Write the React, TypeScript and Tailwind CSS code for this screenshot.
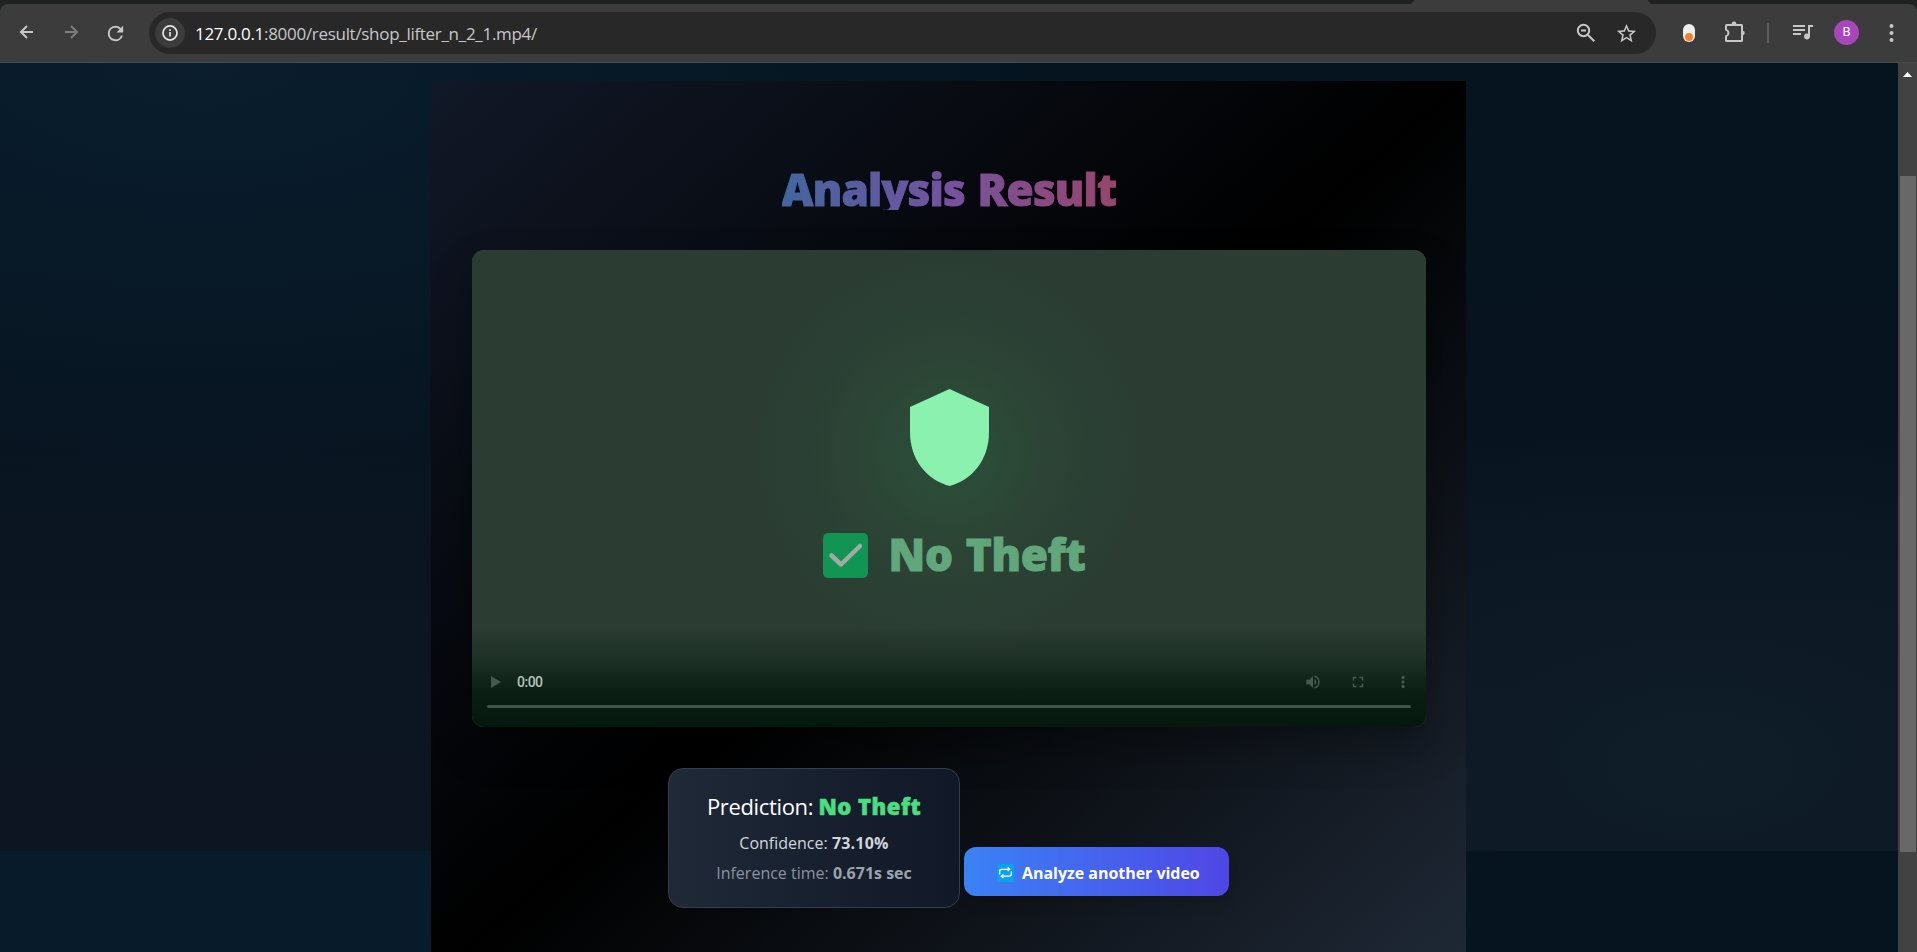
import React from "react";

const T = ({ className, children }: { className: string; children: React.ReactNode }) => (
  <span className={"inline-block whitespace-nowrap " + className}>{children}</span>
);

function Toolbar() {
  return (
    <header className="h-[63px] shrink-0 bg-[#1f2120]">
      <div className="flex h-[4px]">
        <div className="h-[4px] w-[1415px] rounded-br-[10px_4px] bg-[#1f2120]" />
        <div className="-mx-[4px] h-[4px] flex-1 bg-[#3c3c3c] [clip-path:polygon(0_100%,1.5%_0,98.5%_0,100%_100%)]" />
        <div className="h-[4px] w-[270px]" />
      </div>
      <div className="flex h-[59px] items-center rounded-t-[8px] border-b border-[#4a4a47] bg-[#3c3c3c] text-[#c7c7c7]">
        <svg className="ml-[15px] size-[24px] -translate-y-px" viewBox="0 0 24 24" fill="none" stroke="currentColor" strokeWidth="2">
          <path d="M18 12H6.500M12 6l-6 6 6 6" />
        </svg>
        <svg className="ml-[20px] size-[24px] -translate-y-px text-[#7d7d7d]" viewBox="0 0 24 24" fill="none" stroke="currentColor" strokeWidth="2">
          <path d="M6 12h11.500M12 6l6 6-6 6" />
        </svg>
        <svg className="ml-[21px] size-[23px]" viewBox="0 0 24 24" fill="currentColor">
          <path d="M17.65 6.35A7.96 7.96 0 0 0 12 4a8 8 0 1 0 7.73 10h-2.08A6 6 0 1 1 12 6c1.66 0 3.14.69 4.22 1.78L13 11h7V4z" />
        </svg>
        <div className="ml-[22px] flex h-[42px] w-[1507px] items-center rounded-full bg-[#282828] pl-[6px]">
          <div className="flex size-[30px] items-center justify-center rounded-full bg-[#3c3c3c]">
            <svg className="size-[18px] text-[#e3e3e3]" viewBox="0 0 20 20" fill="none" stroke="currentColor" strokeWidth="1.900">
              <circle cx="10" cy="10" r="7.800" />
              <path d="M10 9v5M10 5.800v2" />
            </svg>
          </div>
          <T className="ml-[10px] translate-y-px font-['Open_Sans',sans-serif] text-[17px] tracking-[-0.3px] text-[#c7c7c7]">
            <span className="text-white">127.0.0.1</span>:8000/result/shop_lifter_n_2_1.mp4/
          </T>
          <div className="ml-auto flex items-center gap-[17px] pr-[18px]">
            <svg className="size-[24px]" viewBox="0 0 24 24" fill="none" stroke="currentColor" strokeWidth="2">
              <circle cx="9.500" cy="9.500" r="5.700" />
              <path d="M14 14l6.300 6.300M7 9.500h5" />
            </svg>
            <svg className="size-[23px]" viewBox="0 0 24 24" fill="currentColor">
              <path d="M22 9.24l-7.19-.62L12 2 9.19 8.63 2 9.24l5.46 4.73L5.82 21 12 17.27 18.18 21l-1.63-7.03zM12 15.4l-3.76 2.27 1-4.28-3.32-2.88 4.38-.38L12 6.1l1.71 4.04 4.38.38-3.32 2.88 1 4.28z" />
            </svg>
          </div>
        </div>
        <div className="ml-[27px] flex h-[18px] w-[12px] items-end justify-center rounded-full bg-[#eeeeee] pb-px">
          <div className="size-[8px] rounded-full bg-[#f5802d]" />
        </div>
        <svg className="ml-[28px] size-[24px] -translate-y-px" viewBox="0 0 24 24" fill="currentColor">
          <path fillRule="evenodd" d="M3.500 4H8.600a2.400 2.400 0 0 1 4.800 0H18.500Q20 4 20 5.500V10.700a2.400 2.400 0 0 1 0 4.600V20.500Q20 22 18.500 22H3.500Q2 22 2 20.500V15.700Q4.500 15 4.500 13T2 10.300V5.500Q2 4 3.500 4zM4 6v3.200Q6.500 10.500 6.500 13T4 16.800V20H18V6z" />
        </svg>
        <div className="ml-[20px] h-[20px] w-[2px] bg-[#5e5e5e]" />
        <svg className="ml-[22px] size-[24px] -translate-y-px" viewBox="0 0 24 24" fill="currentColor">
          <path d="M2 5h12v2H2zM2 9h12v2H2zM2 13h8v2H2zM17 5h5v2h-3v9.500a3 3 0 1 1-2-2.830z" />
        </svg>
        <div className="ml-[19px] flex size-[25px] -translate-y-px items-center justify-center rounded-full bg-[#a946bb] font-[Roboto,sans-serif] text-[13px] text-white">B</div>
        <svg className="ml-[20px] size-[24px]" viewBox="0 0 24 24" fill="currentColor">
          <circle cx="12.500" cy="5" r="2" />
          <circle cx="12.500" cy="12" r="2" />
          <circle cx="12.500" cy="19" r="2" />
        </svg>
      </div>
    </header>
  );
}

function Player() {
  return (
    <div className="relative flex h-[477px] w-[954px] flex-col overflow-hidden rounded-[12px] bg-[#2b3d32]">
      <div className="absolute inset-0 bg-[radial-gradient(circle_at_477px_202px,#2a4e3b_0,#2c4a38_50px,#2c4435_95px,#2b4034_140px,#2b3d32_200px)]" />
      <div className="absolute inset-x-0 bottom-0 h-[100px] bg-[linear-gradient(to_bottom,rgba(4,24,14,0)_0%,rgba(4,24,14,0.3)_30%,rgba(4,24,14,0.85)_66%,#04180e_100%)]" />
      <div className="relative flex flex-col items-center pt-[139px] pl-px">
        <svg className="h-[97px] w-[79px]" viewBox="0 0 79 97">
          <path fill="#8af1ae" d="M39.500 0L79 18v25c0 28-17 48-39.500 54C17 91 0 71 0 43V18z" />
        </svg>
        <div className="mt-[44px] ml-[10px] flex h-[50px] w-[264px] items-center">
          <svg className="size-[45px] shrink-0" viewBox="0 0 45 45">
            <rect width="45" height="45" rx="5" fill="#129453" />
            <path d="M8.500 22.500l9.500 9 19-18.500" fill="none" stroke="#a1aaa4" strokeWidth="4.500" strokeLinecap="round" strokeLinejoin="round" />
          </svg>
          <T className="ml-[21px] -translate-y-px font-['Open_Sans',sans-serif] text-[44px] leading-[50px] font-extrabold tracking-[-0.3px] text-[#62a77b] [-webkit-text-stroke:1px_#62a77b] [word-spacing:2px]">No Theft</T>
        </div>
      </div>
      <div className="relative mt-auto h-[65px] px-[15px]">
        <div className="flex h-[40px] items-center text-[#46594e]">
          <svg className="ml-[4px] h-[12px] w-[10px]" viewBox="0 0 10 12" fill="currentColor"><path d="M0 0l10 6-10 6z" /></svg>
          <T className="ml-[16px] font-[Roboto,sans-serif] text-[14px] leading-[20px] font-medium tracking-[-0.5px] text-[#b4c5bb]">0:00</T>
          <svg className="ml-auto size-[18px]" viewBox="0 0 24 24" fill="currentColor">
            <path d="M3 9v6h4l5 5V4L7 9zm13.500 3A4.500 4.500 0 0 0 14 7.970v8.050A4.470 4.470 0 0 0 16.500 12zM14 3.230v2.060a7 7 0 0 1 0 13.420v2.060a9 9 0 0 0 0-17.540z" />
          </svg>
          <svg className="ml-[27px] size-[18px]" viewBox="0 0 24 24" fill="currentColor">
            <path d="M7 14H5v5h5v-2H7zM5 10h2V7h3V5H5zm12 7h-3v2h5v-5h-2zM14 5v2h3v3h2V5z" />
          </svg>
          <svg className="-mr-px ml-[27px] size-[18px]" viewBox="0 0 24 24" fill="currentColor">
            <circle cx="12" cy="6" r="2.200" /><circle cx="12" cy="12" r="2.200" /><circle cx="12" cy="18" r="2.200" />
          </svg>
        </div>
        <div className="mt-[3px] h-[3px] rounded-full bg-[#405548]" />
      </div>
    </div>
  );
}

export default function App() {
  return (
    <div className="flex h-[952px] w-[1917px] flex-col overflow-hidden bg-[#071421]">
      <Toolbar />
      <div className="flex min-h-0 flex-1">
        <main className="flex flex-1 justify-center overflow-hidden bg-[radial-gradient(ellipse_600px_330px_at_1700px_700px,rgba(16,38,46,0.5),transparent),radial-gradient(ellipse_900px_420px_at_200px_0px,rgba(12,36,56,0.6),transparent),linear-gradient(to_bottom,#05141f_0%,#071420_45%,#0c1522_70%,#0d1522_100%)] bg-[length:100%_788px] bg-no-repeat">
          <div className="flex h-full flex-1 flex-col">
            <div className="h-[788px] shrink-0" />
            <div className="flex-1 bg-[#081b2b]" />
          </div>
          <section className="mt-[18px] flex h-[900px] w-[1035px] shrink-0 flex-col items-center bg-linear-to-br/srgb from-[#111827] via-black to-[#1f2937] pt-[87px]">
            <h1 className="ml-px h-[42px] bg-[linear-gradient(to_right,#42669f,#7552a0,#98456c)] bg-clip-text font-['Open_Sans',sans-serif] text-[44px] leading-[43px] font-extrabold tracking-[-0.8px] whitespace-nowrap text-transparent [-webkit-text-stroke:1px_transparent] [word-spacing:2px]">Analysis Result</h1>
            <div className="mt-[40px] ml-px rounded-[12px] shadow-[0_20px_40px_rgba(0,0,0,0.3)]">
              <Player />
            </div>
            <div className="mt-[41px] flex w-[561px] items-end justify-between font-['Open_Sans',sans-serif]">
              <div className="flex h-[140px] w-[292px] flex-col items-center rounded-[15px] border border-[#343e4d] bg-linear-to-r/srgb from-[#1f2937] to-[#111827] pt-[22px]">
                <T className="text-[22px] leading-[30px] tracking-[-0.35px] text-white">Prediction: <b className="font-extrabold tracking-[0.5px] text-[#4ade80] [-webkit-text-stroke:0.6px_#4ade80]">No Theft</b></T>
                <T className="mt-[10px] text-[16px] leading-[24px] text-[#d1d5db]">Confidence: <b className="font-bold tracking-[0.2px]">73.10%</b></T>
                <T className="mt-[6px] text-[16px] leading-[24px] text-[#8b93a0]">Inference time: <b className="font-bold text-[#9ca3af]">0.671s sec</b></T>
              </div>
              <div className="mb-[12px] flex h-[49px] w-[265px] items-center rounded-[12px] bg-linear-to-r/srgb from-[#3b82f6] to-[#4f46e5] pt-[2px] pl-[33px] text-white shadow-lg">
                <svg className="h-[18px] w-[17px]" viewBox="0 0 16 17">
                  <rect width="16" height="17" rx="1" fill="#0aa2ec" />
                  <path d="M2.500 10V7Q2.500 5 4.500 5H11M13.500 7v2.500q0 2-2 2H5M10 3.300l2 1.700L10 6.700M6 9.800l-2 1.700L6 13.200" fill="none" stroke="white" strokeWidth="1.200" />
                </svg>
                <T className="ml-[8px] text-[16px] leading-[24px] font-bold tracking-[-0.04px]">Analyze another video</T>
              </div>
            </div>
          </section>
          <div className="flex h-full w-[432px] flex-col">
            <div className="h-[788px] shrink-0" />
            <div className="flex-1 bg-[#05141f]" />
          </div>
        </main>
        <div className="flex w-[19px] flex-col items-center bg-[#424242] pt-[9px]">
          <svg className="h-[5px] w-[9px]" viewBox="0 0 9 5"><path d="M4.500 0L9 5H0z" fill="white" /></svg>
          <div className="mt-[99px] h-[676px] w-[16px] bg-[#686868]" />
        </div>
      </div>
    </div>
  );
}
